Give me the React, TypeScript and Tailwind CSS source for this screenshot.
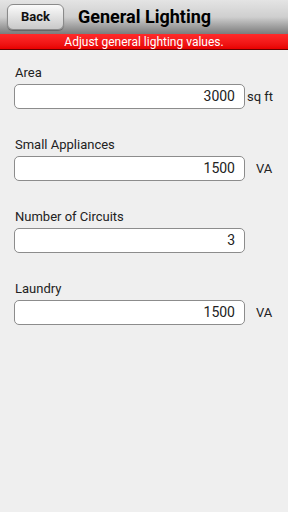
const fields = [
    { label: 'Area', value: '3000', unit: 'sq ft', unitClass: 'pl-[2px]' },
    { label: 'Small Appliances', value: '1500', unit: 'VA', unitClass: 'pl-[11px]' },
    { label: 'Number of Circuits', value: '3', unit: '', unitClass: '' },
    { label: 'Laundry', value: '1500', unit: 'VA', unitClass: 'pl-[11px]' },
];

const App = () => {
    return (
        <div className="w-[288px] h-[512px] bg-[#efefef] font-['Roboto',sans-serif] overflow-hidden">
            <div className="h-[34px] flex items-center bg-gradient-to-b from-[#e4e4e4] via-[#cfcfcf] to-[#7c7c7c]">
                <button className="ml-[7px] w-[57px] h-[26px] rounded-[6px] border border-[#8a8a8a] bg-gradient-to-b from-[#fbfbfb] to-[#c9c9c9] text-[13px] font-bold text-[#111] shadow-[0_1px_1px_rgba(0,0,0,0.3)]">
                    Back
                </button>
                <h1 className="ml-[14px] text-[18px] font-bold text-black leading-none">General Lighting</h1>
            </div>
            <div className="h-[16px] bg-gradient-to-b from-[#ff2a2a] to-[#e80000] border-b border-[#6a0000] flex items-center justify-center">
                <span className="text-[12px] text-white leading-none">Adjust general lighting values.</span>
            </div>
            <div className="pt-[15px] pl-[14px]">
                {fields.map((f) => (
                    <div key={f.label} className="h-[72px]">
                        <div className="pl-[1px] text-[13px] text-[#222] leading-[16px] h-[19px]">{f.label}</div>
                        <div className="flex items-center">
                            <div className="w-[231px] h-[25px] rounded-[5px] border border-[#8c8c8c] bg-white flex items-center justify-end pr-[9px] text-[14px] text-[#222]">
                                {f.value}
                            </div>
                            {f.unit && <span className={`text-[13px] text-[#222] ${f.unitClass}`}>{f.unit}</span>}
                        </div>
                    </div>
                ))}
            </div>
        </div>
    );
};

export default App;
